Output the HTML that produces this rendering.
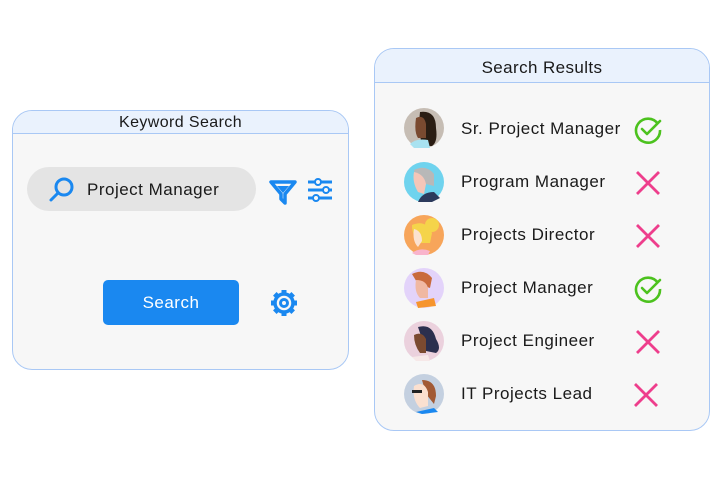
<!DOCTYPE html>
<html><head><meta charset="utf-8"><style>
body{margin:0;width:720px;height:480px;background:#fff;position:relative;overflow:hidden;font-family:"Liberation Sans",sans-serif;color:#1a1a1a}
.p{position:absolute;background:#f7f7f7;border:1px solid #a9c8f5;box-sizing:border-box;overflow:hidden}
.h{background:#eaf2fd;border-bottom:1px solid #a9c8f5;text-align:center;box-sizing:border-box}
.t{position:absolute;font-size:17px;white-space:nowrap;letter-spacing:0.5px}
svg{position:absolute}
</style></head><body>
<div class="p" style="left:12px;top:110px;width:337px;height:260px;border-radius:20px">
<div class="h" style="height:23px;font-size:16px;line-height:23px;letter-spacing:0.4px">Keyword Search</div>
</div>
<div style="position:absolute;left:27px;top:167px;width:229px;height:44px;border-radius:22px;background:#e4e4e4"></div>
<svg style="left:48px;top:176px" width="28" height="28" viewBox="0 0 28 28"><circle cx="16" cy="11" r="8" fill="none" stroke="#1a88f0" stroke-width="3"/><line x1="10" y1="17" x2="3" y2="24" stroke="#1a88f0" stroke-width="3" stroke-linecap="round"/></svg>
<div class="t" style="left:87px;top:180px">Project Manager</div>
<svg style="left:268px;top:178px" width="30" height="28" viewBox="0 0 30 28"><path d="M3 4H27L17 16V25L13 21V16Z" fill="none" stroke="#1a88f0" stroke-width="3.5" stroke-linejoin="round"/><path d="M9 8H21L15 15Z" fill="#1a88f0"/></svg>
<svg style="left:306px;top:178px" width="28" height="24" viewBox="0 0 28 24"><g stroke="#1a88f0" stroke-width="3"><line x1="2" y1="4" x2="26" y2="4"/><line x1="2" y1="12" x2="26" y2="12"/><line x1="2" y1="20" x2="26" y2="20"/></g><g fill="#f7f7f7" stroke="#1a88f0" stroke-width="2"><circle cx="12" cy="4" r="3"/><circle cx="20" cy="12" r="3"/><circle cx="10" cy="20" r="3"/></g></svg>
<div style="position:absolute;left:103px;top:280px;width:136px;height:45px;border-radius:5px;background:#1a88f0;color:#fff;font-size:17px;text-align:center;line-height:45px;letter-spacing:0.5px">Search</div>
<svg style="left:269px;top:288px" width="30" height="30" viewBox="0 0 30 30"><g fill="none" stroke="#1a88f0"><circle cx="15" cy="15" r="9" stroke-width="3.5"/><circle cx="15" cy="15" r="3.5" stroke-width="3"/></g><g stroke="#1a88f0" stroke-width="5"><line x1="15" y1="2" x2="15" y2="6"/><line x1="15" y1="24" x2="15" y2="28"/><line x1="2" y1="15" x2="6" y2="15"/><line x1="24" y1="15" x2="28" y2="15"/><line x1="5.8" y1="5.8" x2="8.6" y2="8.6"/><line x1="21.4" y1="21.4" x2="24.2" y2="24.2"/><line x1="5.8" y1="24.2" x2="8.6" y2="21.4"/><line x1="21.4" y1="8.6" x2="24.2" y2="5.8"/></g></svg>

<div class="p" style="left:374px;top:48px;width:336px;height:383px;border-radius:20px">
<div class="h" style="height:34px;font-size:17px;line-height:38px;letter-spacing:0.4px">Search Results</div>
</div>

<svg style="left:404px;top:108px" width="40" height="40"><circle cx="20" cy="20" r="20" fill="#c6bdb4"/><path d="M16 4Q32 2 32 20Q34 34 28 38L18 38Q14 20 16 4Z" fill="#2a1d13"/><path d="M12 10Q20 6 22 16L22 30L14 30Q10 24 12 10Z" fill="#7a4a30"/><path d="M6 36Q12 30 24 32L26 40L10 40Z" fill="#a8e2f0"/></svg>
<svg style="left:404px;top:162px" width="40" height="40"><circle cx="20" cy="20" r="20" fill="#6fd3ee"/><path d="M10 8Q22 2 30 12L30 24L22 22Q12 20 10 8Z" fill="#b8b8b8"/><path d="M10 10Q20 12 22 22L20 32L14 30Q8 20 10 10Z" fill="#f4c6b8"/><path d="M14 40Q18 30 30 30L36 36L28 40Z" fill="#2c3a5c"/></svg>
<svg style="left:404px;top:215px" width="40" height="40"><circle cx="20" cy="20" r="20" fill="#f7a55a"/><circle cx="28" cy="10" r="7" fill="#f5d44a"/><path d="M8 10Q22 4 28 18L26 28L16 28Q8 22 8 10Z" fill="#f5d44a"/><path d="M10 14Q18 16 18 26L14 32Q8 26 10 14Z" fill="#fbe2d0"/><path d="M8 38Q16 32 26 36L24 40L12 40Z" fill="#f9b4cc"/></svg>
<svg style="left:404px;top:268px" width="40" height="40"><circle cx="20" cy="20" r="20" fill="#e3d3fa"/><path d="M8 6Q20 0 28 10L26 20L14 16Z" fill="#c96a3c"/><path d="M12 12Q22 12 24 20L24 30L16 30Q10 24 12 12Z" fill="#f0b8a2"/><path d="M12 34L30 30L32 38L14 40Z" fill="#f6952e"/></svg>
<svg style="left:404px;top:321px" width="40" height="40"><circle cx="20" cy="20" r="20" fill="#ebd1dd"/><path d="M14 6Q28 2 32 18Q38 28 32 32L22 30Z" fill="#2b2f4e"/><path d="M10 14Q18 10 22 18L22 32L16 32Q10 24 10 14Z" fill="#7b4a30"/><path d="M8 36L24 34L26 40L12 40Z" fill="#f6e8e8"/></svg>
<svg style="left:404px;top:374px" width="40" height="40"><circle cx="20" cy="20" r="20" fill="#c4d0e0"/><path d="M18 6Q32 6 32 22L30 30L22 20Z" fill="#a25a35"/><path d="M10 12Q20 6 24 18L24 32L16 34Q8 26 10 12Z" fill="#fbe0d0"/><rect x="8" y="16" width="10" height="3" fill="#222"/><path d="M12 38L30 34L34 38L18 40Z" fill="#1a88f0"/></svg>

<div class="t" style="left:461px;top:119px">Sr. Project Manager</div>
<div class="t" style="left:461px;top:172px">Program Manager</div>
<div class="t" style="left:461px;top:225px">Projects Director</div>
<div class="t" style="left:461px;top:278px">Project Manager</div>
<div class="t" style="left:461px;top:331px">Project Engineer</div>
<div class="t" style="left:461px;top:384px">IT Projects Lead</div>

<svg style="left:633px;top:115px" width="30" height="30" viewBox="0 0 30 30"><path d="M25 9A12 12 0 1 0 27 15" fill="none" stroke="#4cc21e" stroke-width="2.6"/><path d="M9 14L14 19L27 6" fill="none" stroke="#4cc21e" stroke-width="2.6" stroke-linecap="round" stroke-linejoin="round"/></svg>
<svg style="left:633px;top:274px" width="30" height="30" viewBox="0 0 30 30"><path d="M25 9A12 12 0 1 0 27 15" fill="none" stroke="#4cc21e" stroke-width="2.6"/><path d="M9 14L14 19L27 6" fill="none" stroke="#4cc21e" stroke-width="2.6" stroke-linecap="round" stroke-linejoin="round"/></svg>
<svg style="left:635px;top:170px" width="26" height="26"><path d="M2 2L24 24M24 2L2 24" stroke="#ee3e8c" stroke-width="2.8"/></svg>
<svg style="left:635px;top:223px" width="26" height="26"><path d="M2 2L24 24M24 2L2 24" stroke="#ee3e8c" stroke-width="2.8"/></svg>
<svg style="left:635px;top:329px" width="26" height="26"><path d="M2 2L24 24M24 2L2 24" stroke="#ee3e8c" stroke-width="2.8"/></svg>
<svg style="left:633px;top:382px" width="26" height="26"><path d="M2 2L24 24M24 2L2 24" stroke="#ee3e8c" stroke-width="2.8"/></svg>
</body></html>
